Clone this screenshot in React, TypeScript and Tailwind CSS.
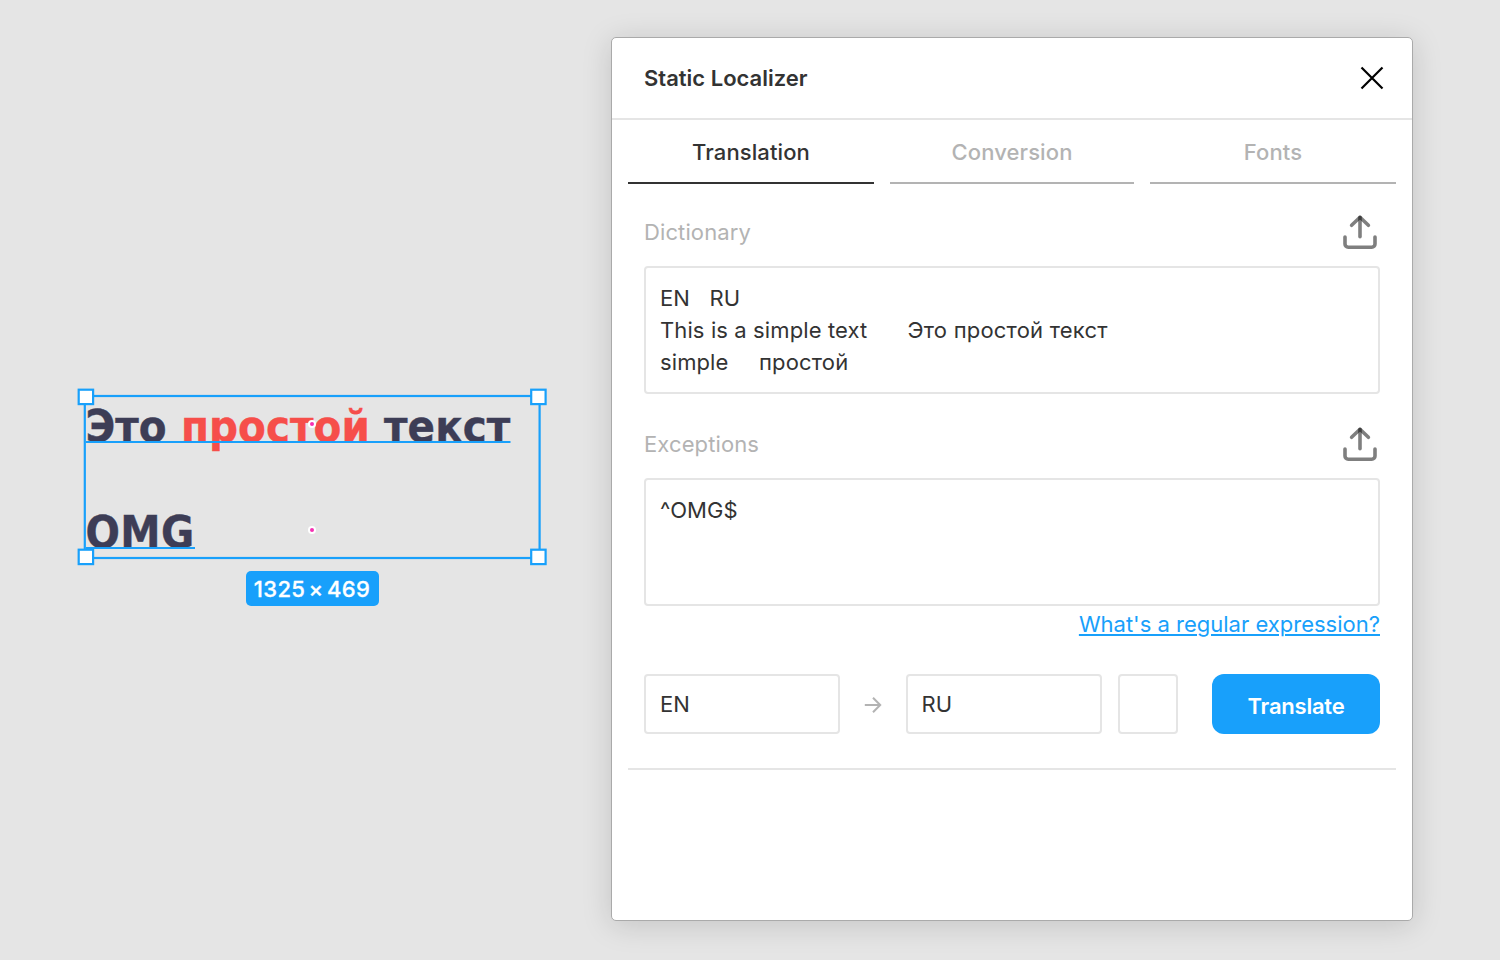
import type { ReactNode } from "react";

const UploadIcon = () => (
  <svg width="36" height="36" viewBox="0 0 36 36" fill="none" stroke="#000" strokeWidth="3.6" strokeLinecap="round">
    <path d="M3 23V30a3.2 3.2 0 0 0 3.2 3.2h23.6A3.2 3.2 0 0 0 33 30v-7" strokeOpacity="0.5" strokeLinejoin="round" />
    <path d="M9.6 11.3 18 3.3l8.4 8" strokeOpacity="0.5" strokeLinejoin="round" />
    <path d="M18 3.3V22.8" strokeOpacity="0.5" />
  </svg>
);

const Tab = ({ children, active, width }: { children: ReactNode; active?: boolean; width: string }) => (
  <div
    className={`flex h-16 items-center justify-center border-b-2 pt-[2px] font-medium tracking-[0.11px] ${width} ${
      active ? "border-[#333] text-[#333]" : "border-[#b3b3b3] text-[#b3b3b3]"
    }`}
  >
    {children}
  </div>
);

const SectionHead = ({ children }: { children: ReactNode }) => (
  <div className="flex h-9 items-center justify-between pr-[2px] text-[#b3b3b3]">
    <span className="tracking-[0.11px]">{children}</span>
    <UploadIcon />
  </div>
);

const handles = [
  [78.7, 389.7],
  [531.2, 389.7],
  [78.7, 549.7],
  [531.2, 549.7],
];

const Selection = () => (
  <svg className="absolute inset-0" width="611" height="960" viewBox="0 0 611 960" fill="none" stroke="#18a0fb" strokeWidth="2.2">
    <path d="M86 442H510.5M86 548H195" strokeWidth="2" />
    <rect x="84.8" y="396" width="454.8" height="162" />
    {handles.map(([x, y]) => (
      <rect key={`${x}-${y}`} x={x} y={y} width="14.4" height="14.4" fill="#fff" />
    ))}
  </svg>
);

const Dot = ({ place }: { place: string }) => (
  <div className={`absolute flex size-2 items-center justify-center rounded-full bg-white ${place}`}>
    <div className="size-1 rounded-full bg-[#f531b3]" />
  </div>
);

const Canvas = () => (
  <div className="relative h-full w-[611px] shrink-0">
    <div className="absolute left-[85.5px] top-[396px] whitespace-nowrap text-[45px] leading-[62px] font-bold tracking-[0.08px] font-stretch-condensed [-webkit-text-stroke:0.4px_currentColor] [font-family:'DejaVu_Sans_Condensed','DejaVu_Sans',sans-serif] text-[#3d3d56]">
      Это <span className="text-[#f64e4a]">простой</span> текст
    </div>
    <div className="absolute left-[85.5px] top-[502px] text-[45px] leading-[62px] font-bold tracking-[0.4px] font-stretch-condensed [-webkit-text-stroke:0.4px_currentColor] [font-family:'DejaVu_Sans_Condensed','DejaVu_Sans',sans-serif] text-[#3d3d56]">
      OMG
    </div>
    <Selection />
    <Dot place="left-[308px] top-[420px]" />
    <Dot place="left-[308px] top-[526px]" />
    <div className="absolute left-[245.5px] top-[571px] flex h-[35px] w-[133px] items-center justify-center rounded-[5px] bg-[#18a0fb] pt-px whitespace-nowrap font-medium tracking-[0.4px] [word-spacing:-3px] [-webkit-text-stroke:0.3px_currentColor] text-white">
      1325 × 469
    </div>
  </div>
);

export default function App() {
  return (
    <div className="flex h-[960px] w-[1500px] overflow-hidden bg-[#e5e5e5] text-[22px] leading-8 [font-family:Inter,sans-serif]">
      <Canvas />
      <main className="mt-[37px] flex h-[884px] w-[802px] flex-col rounded-[5px] border border-[#aaa] bg-white shadow-[0_4px_30px_rgba(0,0,0,0.15)]">
        <header className="flex h-[82px] shrink-0 items-center justify-between border-b-2 border-[#e5e5e5] pr-7 pl-8">
          <h1 className="font-semibold text-[#333]">Static Localizer</h1>
          <svg width="24" height="24" viewBox="0 0 24 24" fill="none" stroke="#000" strokeWidth="2.2">
            <path d="M1.5 1.5 22.5 22.5M22.5 1.5 1.5 22.5" />
          </svg>
        </header>
        <nav className="flex gap-4 px-4">
          <Tab width="w-[246px]" active>Translation</Tab>
          <Tab width="w-[244px]">Conversion</Tab>
          <Tab width="w-[246px]">Fonts</Tab>
        </nav>
        <section className="flex flex-col px-8 pt-[30px] text-[#333]">
          <SectionHead>Dictionary</SectionHead>
          <div className="mt-4 h-32 rounded-[4px] border-2 border-[#e5e5e5] px-[14px] py-[14px] tracking-[0.11px] whitespace-nowrap">
            <div className="flex"><span className="w-[49.5px]">EN</span><span>RU</span></div>
            <div className="flex"><span className="w-[247.5px]">This is a simple text</span><span className="tracking-[0.2px]">Это простой текст</span></div>
            <div className="flex"><span className="w-[99px]">simple</span><span className="tracking-[0.15px]">простой</span></div>
          </div>
          <div className="mt-8">
            <SectionHead>Exceptions</SectionHead>
          </div>
          <div className="mt-4 h-32 rounded-[4px] border-2 border-[#e5e5e5] px-[14px] py-[14px] tracking-[0.05px]">^OMG$</div>
          <a className="mt-[2px] self-end text-[#18a0fb] underline decoration-2 underline-offset-[2px]">What's a regular expression?</a>
          <div className="mt-[34px] flex items-center">
            <div className="flex h-[60px] w-[196px] items-center rounded-[4px] border-2 border-[#e5e5e5] px-[14px]">EN</div>
            <svg className="mx-6" width="18" height="18" viewBox="0 0 18 18" fill="none" stroke="#b3b3b3" strokeWidth="2">
              <path d="M0.8 10H16.5M9 2.8 16.2 10 9 17.2" />
            </svg>
            <div className="flex h-[60px] w-[196px] items-center rounded-[4px] border-2 border-[#e5e5e5] px-[13.5px]">RU</div>
            <div className="ml-4 size-[60px] rounded-[4px] border-2 border-[#e5e5e5]" />
            <button className="ml-auto h-[60px] w-[168px] rounded-[12px] bg-[#18a0fb] pt-1 font-semibold tracking-[-0.22px] text-white">Translate</button>
          </div>
        </section>
        <hr className="mx-4 mt-[34px] border-t-2 border-[#e5e5e5]" />
      </main>
    </div>
  );
}
